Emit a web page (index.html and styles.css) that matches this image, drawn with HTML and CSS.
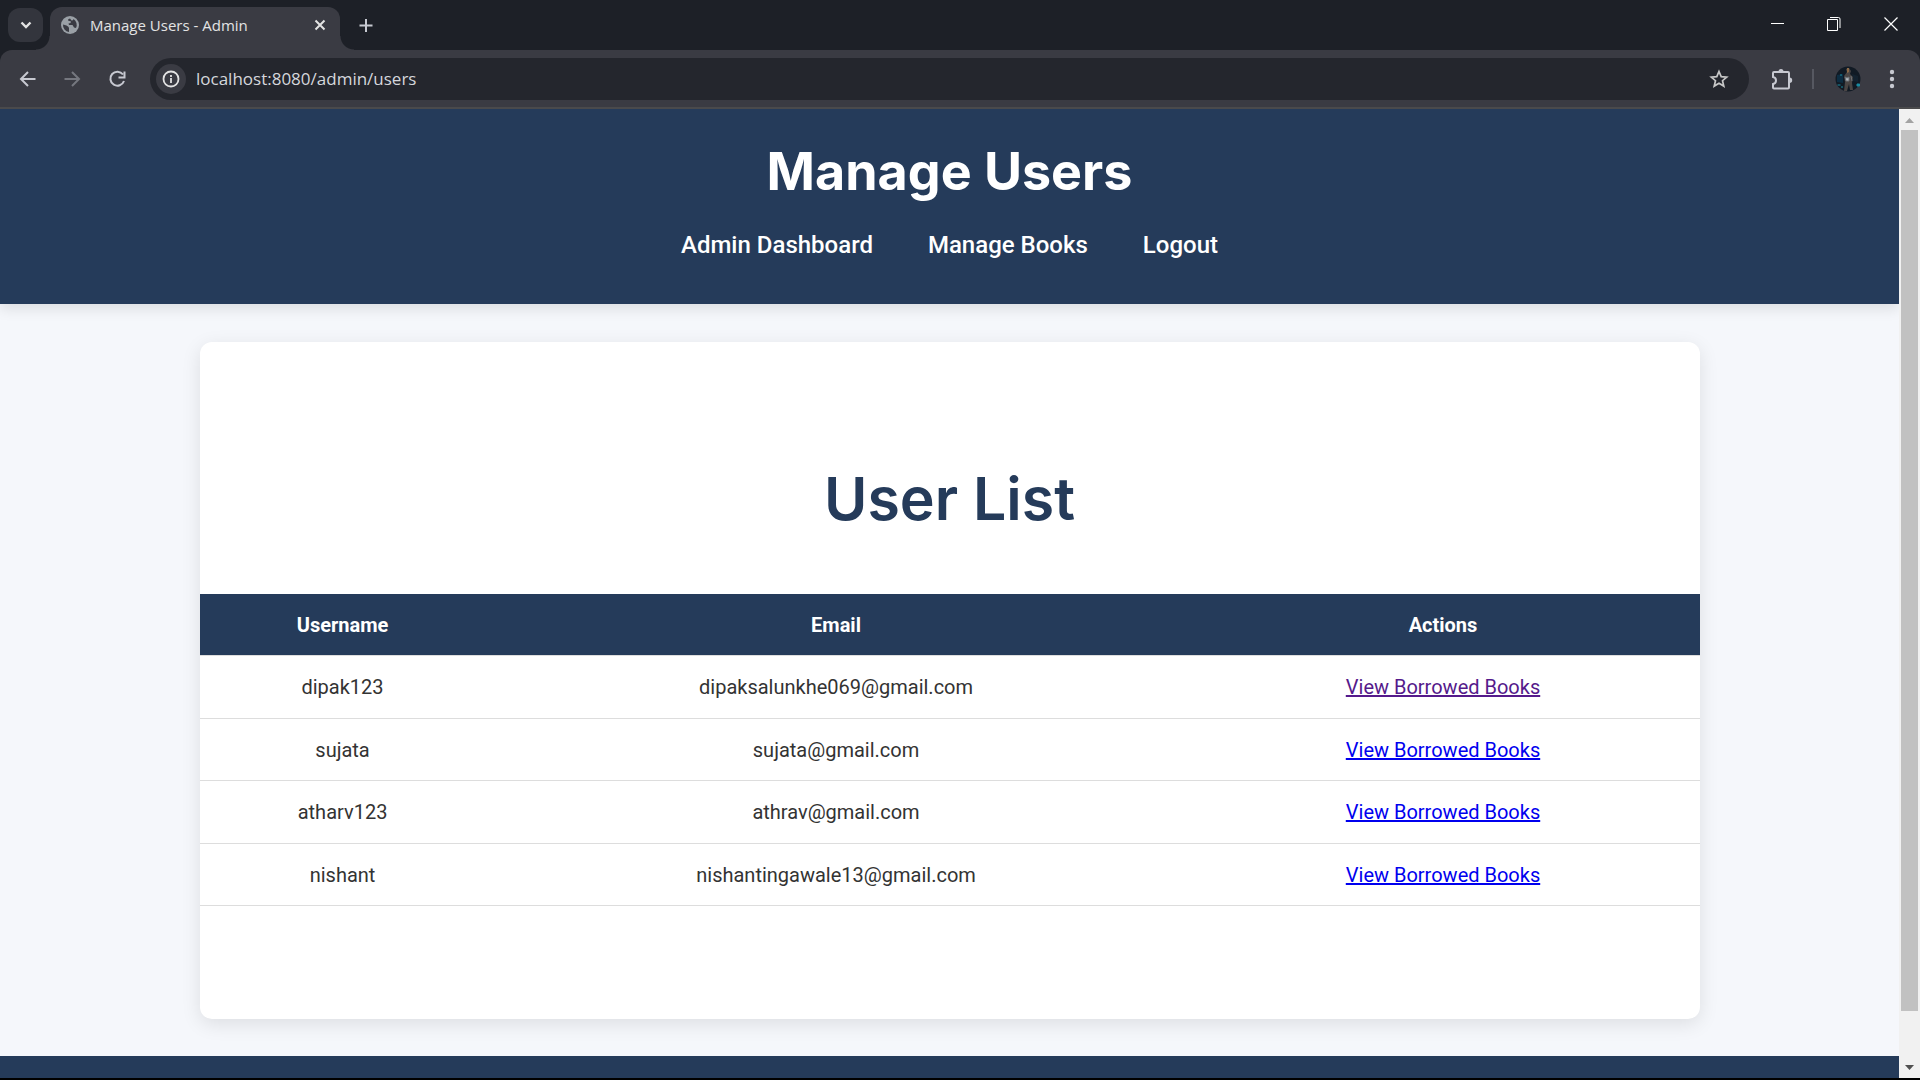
FILE: index.html
```html
<!DOCTYPE html>
<html lang="en">
<head>
<meta charset="utf-8">
<meta name="viewport" content="width=device-width, initial-scale=1">
<title>Manage Users - Admin</title>
<link rel="stylesheet" href="styles.css">
</head>
<body>
<div class="tab-strip">
  <button class="tab-search" type="button" aria-label="Search tabs">
    <svg width="20" height="20" viewBox="0 0 20 20"><path d="M5.500 7.500l4.500 4.500 4.500-4.500" fill="none" stroke="#e3e3e3" stroke-width="2.400"/></svg>
  </button>
  <div class="tab">
    <svg class="globe" width="18" height="18" viewBox="0 0 18 18"><circle cx="9" cy="9" r="9" fill="#9aa0a6"/><path d="M2 8.500L5.500 9.500Q8 10.500 8 12L8 16A7 7 0 0 1 2 8.500ZM9 2.500Q6.500 3 7 4.500L10 5.500L9.500 7L7.500 7.500L8 9L11.500 9L13 11.500L15 12A7 7 0 0 0 12.500 3Q12.500 4.500 10.500 4.500Z" fill="#3a3b43"/></svg>
    <span class="tab-title">Manage Users - Admin</span>
    <button class="icon-button tab-close" type="button" aria-label="Close tab">
      <svg width="20" height="20" viewBox="0 0 20 20"><path d="M5.500 5.500l9 9M14.500 5.500l-9 9" stroke="#e3e3e3" stroke-width="2"/></svg>
    </button>
  </div>
  <button class="icon-button new-tab" type="button" aria-label="New tab">
    <svg width="20" height="20" viewBox="0 0 20 20"><path d="M10 4v13M3.500 10.500h13" stroke="#c7c9d1" stroke-width="2"/></svg>
  </button>
  <div class="window-controls">
    <button class="icon-button" type="button" aria-label="Minimize"><svg width="14" height="14" viewBox="0 0 14 14"><path d="M1 6.500h13" stroke="#fff"/></svg></button>
    <button class="icon-button" type="button" aria-label="Restore"><svg width="14" height="14" viewBox="0 0 14 14"><path d="M.5 2.500h10v11H.5ZM3 .5h8.500q1.500 0 1.500 1.500v9" fill="none" stroke="#fff"/></svg></button>
    <button class="icon-button" type="button" aria-label="Close"><svg width="14" height="14" viewBox="0 0 14 14"><path d="M.5 .5l13 13M13.500 .5l-13 13" stroke="#fff" stroke-width="1.200"/></svg></button>
  </div>
</div>
<div class="toolbar">
  <div class="history">
    <button class="icon-button" type="button" aria-label="Back"><svg width="20" height="20" viewBox="0 0 20 20"><path d="M17.500 10H3.500M10 3L3 10l7 7" fill="none" stroke="#c7c9d1" stroke-width="2"/></svg></button>
    <button class="icon-button" type="button" aria-label="Forward"><svg width="20" height="20" viewBox="0 0 20 20"><path d="M1.500 10h14M9 3l7 7-7 7" fill="none" stroke="#75777f" stroke-width="2"/></svg></button>
    <button class="icon-button" type="button" aria-label="Reload"><svg width="20" height="20" viewBox="0 0 20 20"><path d="M15 5.500A7 7 0 1 0 16 12M16.500 2.500v6h-6" fill="none" stroke="#c7c9d1" stroke-width="2"/></svg></button>
  </div>
  <div class="address">
    <button class="site-info" type="button" aria-label="Site information"><svg width="18" height="18" viewBox="0 0 18 18"><circle cx="9" cy="9" r="7.500" fill="none" stroke="#e3e3e3" stroke-width="1.800"/><path d="M9 8v5M9 5v2" stroke="#e3e3e3" stroke-width="1.800"/></svg></button>
    <input class="url" type="text" aria-label="Address" value="localhost:8080/admin/users">
    <button class="icon-button" type="button" aria-label="Bookmark"><svg width="20" height="20" viewBox="0 0 20 20"><path d="M10 2.500l2.200 5.100 5.500.5-4.200 3.600 1.300 5.400-4.800-2.900-4.800 2.900 1.300-5.400-4.200-3.600 5.500-.5Z" fill="none" stroke="#c7c7c7" stroke-width="1.700"/></svg></button>
  </div>
  <div class="actions">
    <button class="icon-button" type="button" aria-label="Extensions"><svg width="22" height="22" viewBox="0 0 22 22"><path d="M2 4Q2 3 3 3H17Q18 3 18 4V18.500Q18 19.500 17 19.500H3Q2 19.500 2 18.500V15Q5 14.500 5 11.500T2 8Z" fill="none" stroke="#c7c9d1" stroke-width="2"/><path d="M7.500 2.500a2.500 2.500 0 0 1 5 0ZM18.500 8.500a2.700 2.700 0 0 1 0 5.400Z" fill="#c7c9d1"/></svg></button>
    <span class="divider"></span>
    <button class="profile" type="button" aria-label="Profile"><svg width="26" height="26" viewBox="0 0 26 26"><circle cx="13" cy="13" r="12.500" fill="#111a24"/><path d="M2 9l6-1v9l-6-1Z" fill="#0c2d42"/><path d="M17 8l6 2v6l-5-1Z" fill="#14222f"/><path d="M2.500 19h3M6 21h2M5 9h2M22 18h2.500v2H22Z" stroke="#1b8ba0" fill="#1b8ba0"/><path d="M11 3l3-1 2 3-1 3 3 3-1 6 1 7h-3l-1-6-2 7H9l1-9-1-6 3-4Z" fill="#4a4544"/><path d="M12 2l2 0v4l-2 1Z" fill="#8b6947"/><path d="M10 11l2 1 2-1v4h-3ZM16 10l1 5" fill="#b5babf" stroke="#6d7278"/></svg></button>
    <button class="icon-button" type="button" aria-label="Menu"><svg width="6" height="20" viewBox="0 0 6 20"><g fill="#c7c9d1"><circle cx="3" cy="3" r="2.200"/><circle cx="3" cy="10" r="2.200"/><circle cx="3" cy="17" r="2.200"/></g></svg></button>
  </div>
</div>
<div class="viewport">
  <div class="page">
    <header class="site-header">
      <h1>Manage Users</h1>
      <nav class="site-nav">
        <a href="#dashboard">Admin Dashboard</a>
        <a href="#books">Manage Books</a>
        <a href="#logout">Logout</a>
      </nav>
    </header>
    <main class="card">
      <h2>User List</h2>
      <table class="users">
        <thead><tr><th scope="col">Username</th><th scope="col">Email</th><th scope="col">Actions</th></tr></thead>
        <tbody>
          <tr><td>dipak123</td><td>dipaksalunkhe069@gmail.com</td><td><a class="seen" href="#dipak123">View Borrowed Books</a></td></tr>
          <tr><td>sujata</td><td>sujata@gmail.com</td><td><a href="#sujata">View Borrowed Books</a></td></tr>
          <tr><td>atharv123</td><td>athrav@gmail.com</td><td><a href="#atharv123">View Borrowed Books</a></td></tr>
          <tr><td>nishant</td><td>nishantingawale13@gmail.com</td><td><a href="#nishant">View Borrowed Books</a></td></tr>
        </tbody>
      </table>
    </main>
    <footer class="site-footer"></footer>
  </div>
  <div class="scrollbar" aria-hidden="true">
    <svg width="21" height="21" viewBox="0 0 21 21"><path d="M6 14l4.500-5 4.500 5Z" fill="#a3a3a3"/></svg>
    <div class="track"><div class="thumb"></div></div>
    <svg width="21" height="21" viewBox="0 0 21 21"><path d="M6 8l4.500 5L15 8Z" fill="#505050"/></svg>
  </div>
</div>
</body>
</html>
```
FILE: styles.css
```css
* {
  box-sizing: border-box;
}

body {
  margin: 0;
  height: 100vh;
  display: flex;
  flex-direction: column;
  overflow: hidden;
  background: #1d2027;
  border-bottom: 2px solid #000;
  font-family: Roboto, "Liberation Sans", sans-serif;
}

button {
  border: 0;
  padding: 0;
  background: none;
  display: grid;
  place-items: center;
}

/* Browser window */

.tab-strip {
  height: 50px;
  flex: none;
  display: flex;
  padding-left: 8px;
}

.icon-button {
  width: 20px;
  height: 20px;
}

.tab-search {
  width: 35px;
  height: 34px;
  margin-top: 8px;
  border-radius: 12px;
  background: #33353d;
}

.tab {
  position: relative;
  width: 290px;
  margin: 7px 0 0 7px;
  padding: 0 10px 8px 11px;
  display: flex;
  align-items: center;
  gap: 11px;
  border-radius: 12px 12px 0 0;
  background: #3a3b43;
}

/* Flared feet of the active tab */
.tab::before,
.tab::after {
  content: "";
  position: absolute;
  bottom: 0;
  width: 14px;
  height: 14px;
}

.tab::before {
  right: 100%;
  background: radial-gradient(circle at 0 0, transparent 13px, #3a3b43 14px);
}

.tab::after {
  left: 100%;
  background: radial-gradient(circle at 100% 0, transparent 13px, #3a3b43 14px);
}

.tab-title {
  flex: 1;
  color: #e3e3e3;
  font: 15px/20px "Open Sans", "Noto Sans", sans-serif;
}

.new-tab {
  margin: 15px 0 0 16px;
}

.window-controls {
  margin: 14px 19px 0 auto;
  display: flex;
  gap: 37px;
}

.toolbar {
  height: 59px;
  flex: none;
  display: flex;
  align-items: center;
  gap: 22px;
  padding: 0 18px;
  border-bottom: 2px solid #4a4a4c;
  border-radius: 12px 12px 0 0;
  background: #3a3b43;
}

.history {
  display: flex;
  gap: 25px;
}

.actions {
  display: flex;
  align-items: center;
  gap: 21px;
}

.address {
  flex: 1;
  height: 42px;
  padding: 0 20px 0 6px;
  display: flex;
  align-items: center;
  gap: 10px;
  border-radius: 21px;
  background: #24262d;
}

.site-info {
  width: 30px;
  height: 30px;
  border-radius: 50%;
  background: #3a3b43;
}

.url {
  flex: 1;
  border: 0;
  padding: 0;
  background: none;
  color: #d5d7dc;
  font: 17px/24px "Open Sans", "Noto Sans", sans-serif;
}

.divider {
  width: 2px;
  height: 20px;
  background: #565861;
}

/* Page */

.viewport {
  flex: 1;
  min-height: 0;
  display: flex;
}

.page {
  flex: 1;
  overflow: hidden;
  background: #f5f7fb;
}

.site-header {
  padding: 25px 25px 43px;
  background: #253b5a;
  box-shadow: 0 5px 13px rgba(0, 0, 0, 0.1);
  color: #fff;
  text-align: center;
}

h1,
h2 {
  margin: 0;
  font-family: Inter, sans-serif;
}

h1 {
  font-size: 52px;
  font-weight: 700;
  line-height: 76px;
}

.site-nav {
  margin-top: 20px;
  display: flex;
  justify-content: center;
  gap: 55px;
}

.site-nav a {
  color: #fff;
  font-size: 24px;
  font-weight: 500;
  line-height: 31px;
  text-decoration: none;
}

.card {
  max-width: 1500px;
  margin: 38px auto 37px;
  padding: 112px 0 113px;
  border-radius: 12px;
  background: #fff;
  box-shadow: 0 5px 19px rgba(0, 0, 0, 0.1);
}

h2 {
  margin-bottom: 50px;
  color: #253b5a;
  font-size: 59px;
  font-weight: 600;
  line-height: 90px;
  text-align: center;
}

.users {
  width: 100%;
  border-collapse: collapse;
  color: #333;
  font-size: 20px;
  line-height: 24px;
}

.users th,
.users td {
  padding: 19px;
  border-bottom: 1px solid #ddd;
  text-align: center;
}

.users tbody tr:nth-child(even) td {
  padding-bottom: 18px;
}

.users th {
  padding-bottom: 18px;
  background: #253b5a;
  color: #fff;
}

.users a {
  color: #0000ee;
}

.users .seen {
  color: #551a8b;
}

.site-footer {
  height: 100px;
  background: #253b5a;
}

.scrollbar {
  width: 21px;
  display: flex;
  flex-direction: column;
  background: #f1f1f1;
}

.track {
  flex: 1;
  padding: 0 2px;
}

.thumb {
  height: 95%;
  background: #c1c1c1;
}
```
